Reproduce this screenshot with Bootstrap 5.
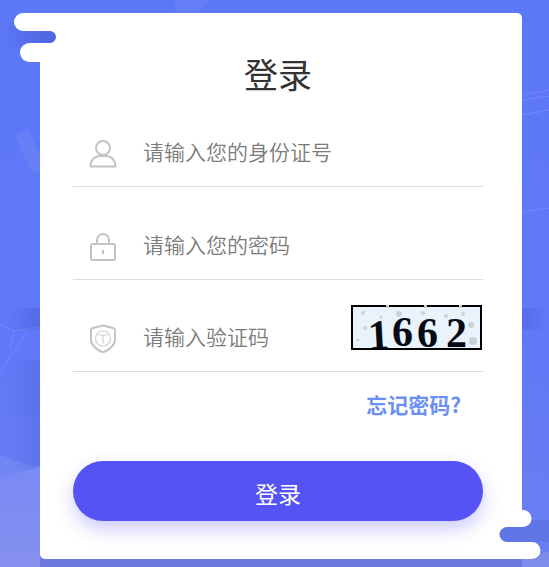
<!DOCTYPE html>
<html lang="zh">
<head>
<meta charset="utf-8">
<link href="https://cdn.jsdelivr.net/npm/bootstrap@5.3.0/dist/css/bootstrap.min.css" rel="stylesheet">
<style>
html,body{height:100%;overflow:hidden}
body{background:linear-gradient(180deg,#5b78f6 0%,#6179f8 60%,#6a7ff0 100%);font-family:"Noto Sans CJK SC","Liberation Sans",sans-serif;position:relative}
.bg-art{position:absolute;inset:0;width:100%;height:100%}
.shape-art{position:absolute;left:-26px;top:0;width:527px;height:546px}
.shell{position:relative;width:482px;height:546px;margin:13px 0 0 40px;padding:0 39px 0 33px}
.shell-inner{position:relative}
.login-title{font-size:34px;line-height:50px;font-weight:400;color:#333;text-align:center;margin:0;padding-top:36px;box-sizing:content-box;height:49px}
.field{height:93px;border-bottom:1px solid #dcdcdc;gap:25px;padding:0 1px 18px 15px}
.field-first{height:89px}
.field-last{height:92px}
.field-icon{width:30px;height:30px;flex:none}
.field-input{border:0;outline:0;padding:0;margin-bottom:2px;background:transparent;font-size:21px;line-height:30px;min-width:0;flex:1;color:#333;font-weight:350}
.field-input::placeholder{color:#7b7b7b;opacity:1}
.captcha{width:131px;height:45px;flex:none;display:block;margin-bottom:3px;margin-left:-25px;overflow:visible}
.forgot{font-size:21px;line-height:30px;font-weight:700;color:#6b8ff2;text-decoration:none;margin-right:22px}
.forgot-row{height:89px;padding-top:17px}
.login-btn{display:block;width:100%;height:60px;border:0;border-radius:30px;padding-top:10px;background:#5553f6;color:#fff;font-size:23px;font-weight:400;box-shadow:0 8px 18px rgba(85,83,246,.3)}
.login-btn:hover{background:#5553f6;color:#fff}
.glyph{fill:none;stroke:#c4c4c4;stroke-width:2}
.glyph-thin{fill:none;stroke:#cfcfcf;stroke-width:1.200}
</style>
</head>
<body>
<svg class="bg-art" viewBox="0 0 549 567" aria-hidden="true">
  <defs>
    <linearGradient id="leftfade" x1="0" x2="1" y1="0" y2="0"><stop offset="0" stop-color="#4a5fd8" stop-opacity="0"/><stop offset="1" stop-color="#4a5fd8" stop-opacity=".55"/></linearGradient>
    <linearGradient id="rightfade" x1="0" x2="1" y1="0" y2="0"><stop offset="0" stop-color="#4a5fd8" stop-opacity=".45"/><stop offset="1" stop-color="#4a5fd8" stop-opacity="0"/></linearGradient>
    <linearGradient id="notchfade" x1="0" x2="1" y1="0" y2="0"><stop offset="0" stop-color="#4a5fd8" stop-opacity="0"/><stop offset="1" stop-color="#4a5fd8" stop-opacity=".8"/></linearGradient>
    <linearGradient id="lowfade" x1="0" x2="0" y1="0" y2="1"><stop offset="0" stop-color="#7a8af6"/><stop offset="1" stop-color="#8590ee"/></linearGradient>
  </defs>
  <rect x="8" y="308" width="32" height="22" fill="url(#leftfade)"/>
  <rect x="522" y="308" width="27" height="22" fill="url(#rightfade)"/>
  <rect x="0" y="25" width="60" height="22" fill="url(#notchfade)"/>
  <rect x="10" y="360" width="30" height="110" fill="url(#leftfade)" opacity=".6"/>
  <path d="M15 135L28 130L40 155V172L30 170Z" fill="#fff" opacity=".06"/>
  <path d="M0 325L14 331L28 328L40 328M0 372L28 330M10 350L14 331" stroke="#fff" stroke-opacity=".12" fill="none"/>
  <path d="M522 95L549 90M522 100L549 96M522 115L549 110M522 212L549 208" stroke="#fff" stroke-opacity=".14" fill="none"/>
  <path d="M175 0L210 0L190 22L175 15Z" fill="#fff" opacity=".05"/>
  <path d="M0 455L35 467L0 478Z" fill="#fff" opacity=".08"/>
  <path d="M0 478L40 466V567H0Z" fill="url(#lowfade)"/>
  <path d="M40 559H549V567H40Z" fill="#6c78dc"/>
  <path d="M522 555L549 552V567H522Z" fill="#7f8bea"/>
  <path d="M500 520H549V542H500Z" fill="#6176e6"/>
</svg>
<main class="shell">
  <svg class="shape-art" viewBox="14 13 527 546" aria-hidden="true">
    <path fill="#fff" d="M23 13H517a5 5 0 0 1 5 5V510h1a8.500 8.500 0 0 1 0 17H507a7.500 7.500 0 0 0 0 15H532a8.500 8.500 0 0 1 0 17H45a5 5 0 0 1-5-5V62H29.500a9.500 9.500 0 0 1 0-19H50a6 6 0 0 0 0-12H23a9 9 0 0 1 0-18Z"/>
  </svg>
  <div class="shell-inner">
    <h1 class="login-title">登录</h1>
    <form>
      <div class="field field-first d-flex align-items-end">
        <svg class="field-icon" viewBox="0 0 30 30" aria-hidden="true"><circle class="glyph" cx="15" cy="10" r="7"/><path class="glyph" d="M2.500 28.500c0-6 4-10.500 9.500-10.500h6c5.500 0 9.500 4.500 9.500 10.500Z"/></svg>
        <input class="field-input" type="text" placeholder="请输入您的身份证号" aria-label="身份证号">
      </div>
      <div class="field d-flex align-items-end">
        <svg class="field-icon" viewBox="0 0 30 30" aria-hidden="true"><path class="glyph" d="M9 13V9a6 6 0 0 1 12 0v4"/><rect class="glyph" x="3" y="13" width="24" height="16" rx="1.500"/><path class="glyph" d="M15 19v4"/></svg>
        <input class="field-input" type="password" placeholder="请输入您的密码" aria-label="密码">
      </div>
      <div class="field field-last d-flex align-items-end">
        <svg class="field-icon" viewBox="0 0 30 30" aria-hidden="true"><path class="glyph" d="M15 2.500 25 5Q27 5.500 27 7.500v9.500c0 5-6 10-12 12.500C9 27 3 22 3 17V7.500q0-2 2-2.500Z"/><circle class="glyph-thin" cx="15" cy="15.500" r="7.500"/><path class="glyph-thin" d="M10.500 12h9M15 12v8.500"/></svg>
        <input class="field-input" type="text" placeholder="请输入验证码" aria-label="验证码">
        <svg class="captcha" viewBox="0 0 131 45" aria-label="验证码图片">
          <rect x="1" y="1" width="129" height="43" fill="#eaf3fc" stroke="#000" stroke-width="2"/>
          <g fill="#b9bcc0" opacity=".6"><circle cx="12" cy="8" r="2"/><circle cx="14" cy="23" r="2"/><circle cx="48" cy="9" r="3"/><circle cx="72" cy="8" r="2"/><circle cx="95" cy="11" r="2"/><circle cx="120" cy="20" r="3"/><circle cx="122" cy="36" r="4"/><circle cx="112" cy="9" r="2"/><circle cx="30" cy="12" r="1.500"/><circle cx="7" cy="35" r="1.500"/></g>
          <g fill="#c9c9c9"><rect x="35" y="0" width="3" height="3"/><rect x="73" y="0" width="3" height="3"/><rect x="108" y="0" width="3" height="3"/></g>
          <g font-family="'Liberation Serif',serif" font-weight="700" font-size="42" fill="#050a14">
            <text x="17" y="44" transform="rotate(-3 28 30)">1</text>
            <text x="41" y="41">6</text>
            <text x="66" y="42">6</text>
            <text x="95" y="42">2</text>
          </g>
        </svg>
      </div>
      <div class="forgot-row text-end">
        <a class="forgot" href="#">忘记密码?</a>
      </div>
      <button class="btn login-btn" type="button">登录</button>
    </form>
  </div>
</main>
<script src="https://cdn.jsdelivr.net/npm/bootstrap@5.3.0/dist/js/bootstrap.bundle.min.js"></script>
</body>
</html>
